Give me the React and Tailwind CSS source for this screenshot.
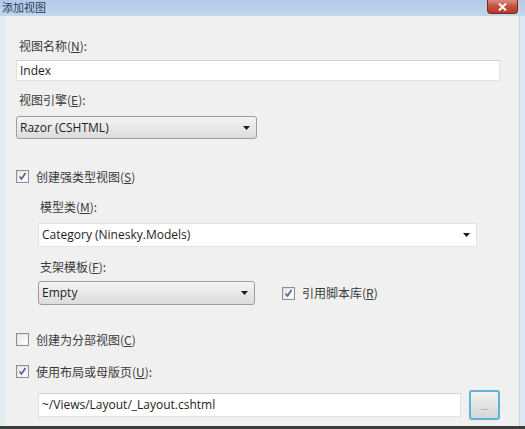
import React from 'react';

const CJK = { fontFamily: '"Noto Sans CJK SC", "Noto Sans", sans-serif' };
const LATIN = { fontFamily: '"Open Sans", "Noto Sans", sans-serif' };

// Small dropdown arrow, the classic Win7 solid triangle.
function Arrow() {
  return (
    <svg width="7" height="4" viewBox="0 0 7 4" className="shrink-0">
      <path d="M0 0h7L3.5 4z" fill="#1a1a1a" />
    </svg>
  );
}

function CheckBox({ checked }) {
  return (
    <span className="w-[13px] h-[13px] shrink-0 border border-[#8e8f8f] bg-gradient-to-br from-[#dcdcdc] to-[#fbfbfb] flex items-center justify-center">
      <span className="w-[9px] h-[9px] bg-gradient-to-br from-[#e9e9e9] to-white flex items-center justify-center">
        {checked && (
          <svg width="9" height="9" viewBox="0 0 9 9">
            <path d="M1.5 4.5l2 2.5L7.5 1" fill="none" stroke="#4a5f97" strokeWidth="1.6" />
          </svg>
        )}
      </span>
    </span>
  );
}

function Label({ children, className = '' }) {
  return (
    <div className={`h-[12px] leading-[12px] text-[12px] text-[#3a3a3a] ${className}`} style={CJK}>
      {children}
    </div>
  );
}

function Check({ checked, children, className = '' }) {
  return (
    <div className={`flex items-center gap-[7px] h-[13px] ${className}`}>
      <CheckBox checked={checked} />
      <span className="text-[12px] leading-[12px] text-[#3a3a3a]" style={CJK}>{children}</span>
    </div>
  );
}

function Dropdown({ value, white = false, className = '' }) {
  return (
    <div
      className={`flex items-center justify-between pl-[3px] pr-[6px] text-[12px] text-[#1e1e1e] ${
        white
          ? 'bg-white border border-[#e2e3ea]'
          : 'rounded-[3px] border border-[#9c9c9c] bg-gradient-to-b from-[#f4f4f4] to-[#dcdcdc]'
      } ${className}`}
      style={LATIN}
    >
      <span>{value}</span>
      <Arrow />
    </div>
  );
}

export default function App() {
  return (
    <div className="w-[525px] h-[429px] overflow-hidden flex flex-col bg-[#f0f0f0] select-none">
      {/* title bar */}
      <div className="h-[16px] shrink-0 bg-gradient-to-b from-[#b3cbe6] to-[#c3d7ec] flex items-start justify-between">
        <span className="ml-[2px] mt-[1px] text-[11px] leading-[13px] text-[#1f3a5f]" style={CJK}>添加视图</span>
        <div className="mr-[7px] w-[31px] h-[14px] rounded-b-[4px] border border-t-0 border-[#7a2a22] bg-gradient-to-b from-[#d98c7f] via-[#c4503e] to-[#b23a28] flex items-center justify-center">
          <svg width="9" height="8" viewBox="0 0 9 8">
            <path d="M1 0.5L8 7.5M8 0.5L1 7.5" stroke="#fff" strokeWidth="2" />
          </svg>
        </div>
      </div>

      <div className="flex-1 flex min-h-0">
        <div className="w-[5px] shrink-0 bg-[#e4ebf3]" />
        <div className="flex-1 flex flex-col pt-[24px] pl-[11px] pr-[14px]">
          <Label className="ml-[3px]">视图名称(<u>N</u>):</Label>
          <div
            className="mt-[8px] h-[21px] w-[484px] bg-white border border-[#e0e1e6] border-t-[#cfd0d4] flex items-center pl-[3px] text-[12px] text-[#1e1e1e]"
            style={LATIN}
          >
            Index
          </div>

          <Label className="ml-[3px] mt-[13px]">视图引擎(<u>E</u>):</Label>
          <Dropdown value="Razor (CSHTML)" className="mt-[10px] h-[23px] w-[241px]" />

          <Check checked className="mt-[31px]">创建强类型视图(<u>S</u>)</Check>

          <div className="ml-[22px] flex flex-col">
            <Label className="mt-[18px] ml-[2px]">模型类(<u>M</u>):</Label>
            <Dropdown white value="Category (Ninesky.Models)" className="mt-[10px] h-[24px] w-[439px]" />

            <Label className="mt-[14px] ml-[2px]">支架模板(<u>F</u>):</Label>
            <div className="mt-[8px] flex items-center">
              <Dropdown value="Empty" className="h-[24px] w-[217px]" />
              <Check checked className="ml-[27px]">引用脚本库(<u>R</u>)</Check>
            </div>
          </div>

          <Check className="mt-[28px]">创建为分部视图(<u>C</u>)</Check>
          <Check checked className="mt-[19px]">使用布局或母版页(<u>U</u>):</Check>

          <div className="ml-[22px] mt-[12px] flex items-center">
            <div
              className="h-[24px] w-[423px] bg-white border border-[#e0e1e6] border-t-[#cfd0d4] flex items-center pl-[3px] text-[12px] text-[#1e1e1e]"
              style={LATIN}
            >
              ~/Views/Layout/_Layout.cshtml
            </div>
            <div className="ml-[8px] w-[31px] h-[30px] rounded-[3px] border-2 border-[#62b0d2] bg-gradient-to-b from-[#f2f2f2] to-[#d6d6d6] flex items-end justify-center pb-[7px] text-[9px] leading-none text-[#888]">
              ...
            </div>
          </div>

          <div className="mt-auto" />
        </div>
        <div className="w-[6px] shrink-0 border-l border-[#c9d6e4] bg-[#dce7f3]" />
      </div>

      {/* tops of the next line, clipped by the screenshot edge */}
      <div className="h-[3px] shrink-0 bg-[#3c3c3c]" />
    </div>
  );
}
